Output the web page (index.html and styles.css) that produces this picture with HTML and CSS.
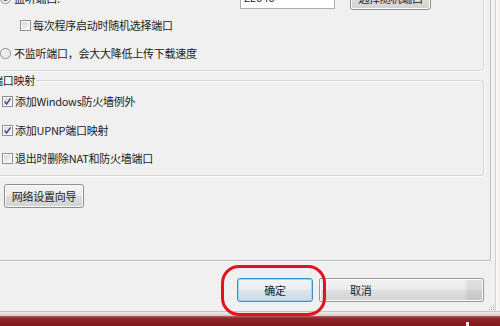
FILE: index.html
```html
<!DOCTYPE html>
<html lang="zh-CN">
<head>
<meta charset="utf-8">
<title>网络设置</title>
<link rel="stylesheet" href="styles.css">
</head>
<body>
<div class="window">
  <div class="tabpage">
    <div class="group g1">
      <div class="row r1">
        <span class="radio on"></span>
        <span class="lbl wide">监听端口:</span>
        <span class="input">22040</span>
        <span class="btn random">选择随机端口</span>
      </div>
      <div class="row r2">
        <span class="check"></span>
        <span class="lbl">每次程序启动时随机选择端口</span>
      </div>
      <div class="row r3">
        <span class="radio"></span>
        <span class="lbl">不监听端口，会大大降低上传下载速度</span>
      </div>
    </div>
    <fieldset class="group g2">
      <legend>端口映射</legend>
      <div class="row c1">
        <span class="check">
          <svg width="11" height="11" viewBox="0 0 11 11"><path d="M2.6 5.4 L4.6 8 L8.6 2.4" fill="none" stroke="#3d5287" stroke-width="1.6"/></svg>
        </span>
        <span class="lbl">添加Windows防火墙例外</span>
      </div>
      <div class="row c2">
        <span class="check">
          <svg width="11" height="11" viewBox="0 0 11 11"><path d="M2.6 5.4 L4.6 8 L8.6 2.4" fill="none" stroke="#3d5287" stroke-width="1.6"/></svg>
        </span>
        <span class="lbl">添加UPNP端口映射</span>
      </div>
      <div class="row c3">
        <span class="check"></span>
        <span class="lbl">退出时删除NAT和防火墙端口</span>
      </div>
    </fieldset>
    <div class="btn wizard">网络设置向导</div>
  </div>
  <div class="footer">
    <div class="btn ok">确定</div>
    <div class="btn cancel">取消</div>
  </div>
  <div class="frame"></div>
  <div class="taskbar"></div>
  <div class="highlight"></div>
  <svg class="grip" width="7" height="7" viewBox="0 0 7 7">
    <rect x="5" y="1" width="1" height="1" fill="#a8a8a8"/>
    <rect x="3" y="3" width="1" height="1" fill="#a8a8a8"/>
    <rect x="5" y="3" width="1" height="1" fill="#a8a8a8"/>
    <rect x="1" y="5" width="1" height="1" fill="#a8a8a8"/>
    <rect x="3" y="5" width="1" height="1" fill="#a8a8a8"/>
    <rect x="5" y="5" width="1" height="1" fill="#a8a8a8"/>
  </svg>
  <div class="blip"></div>
</div>
</body>
</html>
```
FILE: styles.css
```css
* { box-sizing: border-box; margin: 0; padding: 0; }
html, body { width: 500px; height: 326px; overflow: hidden; }
body {
  background: #f0f0f0;
  font-family: "Noto Sans CJK SC", "Microsoft YaHei", sans-serif;
  font-size: 11px;
  color: #1c1c1c;
}
.window {
  position: relative;
  width: 500px;
  height: 326px;
  overflow: hidden;
  display: flex;
  flex-direction: column;
  background: #f0f0f0;
}
.window::after {
  content: "";
  position: absolute;
  right: 0;
  top: 0;
  bottom: 15px;
  width: 4px;
  border-left: 1px solid #d2d2d2;
  background: linear-gradient(90deg, #fbfbfb, #f1eded);
}
.tabpage {
  flex: none;
  margin: -40px 0 0 -20px;
  width: 511px;
  height: 301px;
  border: 1px solid #bababa;
  padding: 4px 6px 0 5px;
  box-shadow: 1px 1px 0 #fdfdfd;
}
.group {
  border: 1px solid #d4d4d4;
  border-radius: 3px;
  box-shadow: inset 1px 1px 0 #fbfbfb, 1px 1px 0 #fbfbfb;
}
.g1 {
  padding: 20px 0 10px 13px;
}
.row {
  display: flex;
  align-items: center;
  height: 14px;
  line-height: 14px;
  white-space: nowrap;
}
.lbl { letter-spacing: -0.25px; }
.r1 { height: 24px; }
.r1 .lbl.wide { width: 226px; margin-left: 3px; }
.r2 { margin-top: 8px; padding-left: 20px; }
.r2 .lbl { margin-left: 2px; }
.r3 { margin-top: 14px; }
.r3 .lbl { margin-left: 3px; }
.input {
  width: 95px;
  height: 21px;
  border: 1px solid #abadb3;
  background: #fff;
  padding: 0 3px;
  line-height: 19px;
  font-family: "Liberation Sans", sans-serif;
}
.btn {
  display: flex;
  align-items: center;
  justify-content: center;
  height: 24px;
  border: 1px solid #8e8e8e;
  border-radius: 3px;
  background: linear-gradient(#f4f4f4 0%, #ececec 48%, #dedede 52%, #d2d2d2 100%);
  box-shadow: inset 0 0 0 1px #fbfbfb;
  letter-spacing: -0.25px;
  white-space: nowrap;
}
.random { width: 81px; margin-left: 15px; }
.radio {
  flex: none;
  width: 11px;
  height: 11px;
  border: 1px solid #8a8a8a;
  border-radius: 50%;
  background: radial-gradient(circle at 50% 50%, #f6f6f6 0, #e2e2e2 60%, #cfcfcf 100%);
  box-shadow: inset 0 0 0 1px #fff;
  position: relative;
}
.radio.on::after {
  content: "";
  position: absolute;
  left: 2px; top: 2px;
  width: 5px; height: 5px;
  border-radius: 50%;
  background: #3a5ea0;
}
.check {
  flex: none;
  width: 11px;
  height: 11px;
  border: 1px solid #8e8e8e;
  background: linear-gradient(135deg, #d6d6d6, #f7f7f7);
  box-shadow: inset 0 0 0 1px #fff;
  display: flex;
  align-items: center;
  justify-content: center;
}
.check svg { display: block; margin: -1px; }
fieldset.g2 {
  margin-top: 2px;
  padding: 0 0 10px 0;
  min-width: 0;
}
.g2 legend {
  margin-left: 4px;
  padding: 0 1px;
  line-height: 14px;
  letter-spacing: -0.25px;
}
.g2 .row { margin-left: 15px; }
.g2 .row .lbl { margin-left: 2px; }
.c1 { margin-top: 7px; }
.c2 { margin-top: 15px; }
.c3 { margin-top: 14px; }
.wizard {
  width: 80px;
  margin: 8px 0 0 18px;
}
.footer {
  flex: none;
  height: 50px;
  display: flex;
  padding: 17px 0 0 237px;
}
.ok {
  width: 76px;
  border-color: #3e8fc6;
  background: linear-gradient(#f1f5f8 0%, #e9eef2 48%, #dce3e9 52%, #d2dae1 100%);
  box-shadow: inset 0 0 0 1px #9fd3f2;
}
.cancel {
  width: 165px;
  margin-left: 6px;
  justify-content: flex-start;
  padding-left: 30px;
  border-color: #9a9a9a;
  border-radius: 2px;
  background:
    linear-gradient(90deg, rgba(0,0,0,0) 0, rgba(0,0,0,0) 88%, rgba(0,0,0,0.07) 91%, rgba(0,0,0,0.07) 100%),
    linear-gradient(#f3f3f3 0%, #ebebeb 48%, #dfdfdf 52%, #d4d4d4 100%);
}
.frame {
  flex: none;
  height: 5px;
  border-top: 1px solid #c3c3c3;
  background: linear-gradient(#f3eeee, #d8c3c4);
}
.taskbar {
  flex: none;
  height: 10px;
  background: linear-gradient(#b5686c 0, #93282c 2px, #8a1d21 60%, #801a1e 100%);
}
.highlight {
  position: absolute;
  left: 221px;
  top: 265px;
  width: 105px;
  height: 51px;
  border: 3px solid #e3131d;
  border-radius: 18px;
}
.grip {
  position: absolute;
  left: 488px;
  top: 304px;
}
.blip {
  position: absolute;
  left: 466px;
  top: 322px;
  width: 3px;
  height: 4px;
  background: #f2e6e6;
}
```
